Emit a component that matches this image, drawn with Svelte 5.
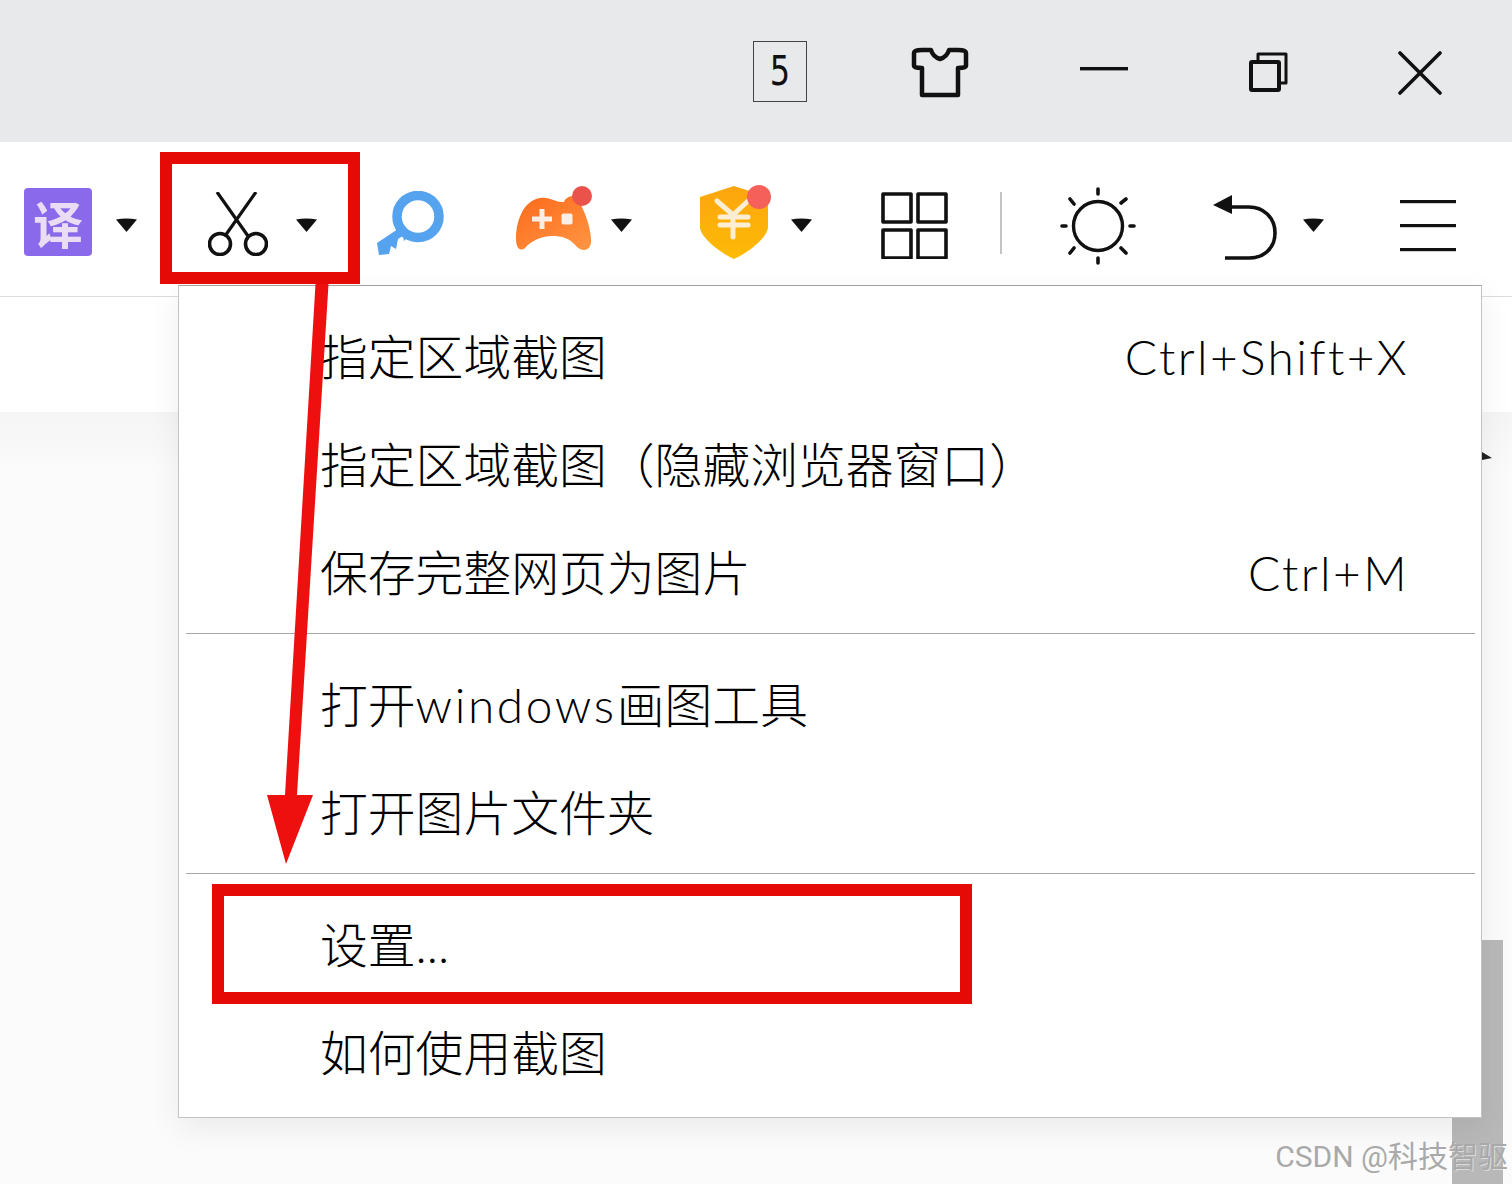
<script lang="ts">
	interface MenuItem {
		label: string;
		shortcut?: string;
	}

	const groups: MenuItem[][] = [
		[
			{ label: '指定区域截图', shortcut: 'Ctrl+Shift+X' },
			{ label: '指定区域截图（隐藏浏览器窗口）' },
			{ label: '保存完整网页为图片', shortcut: 'Ctrl+M' }
		],
		[{ label: '打开windows画图工具' }, { label: '打开图片文件夹' }],
		[{ label: '设置...' }, { label: '如何使用截图' }]
	];
</script>

{#snippet caret()}
	<svg class="caret" width="21" height="14" viewBox="0 0 21 14"><path d="M0 1.5Q10 -0.5 21 1.5L10.5 14Z" fill="#111" /></svg>
{/snippet}

<div class="page">
	<div class="titlebar">
		<div class="tab-count"><span>5</span></div>
		<svg class="shirt" width="58" height="52" viewBox="0 0 58 52" fill="none" stroke="#111" stroke-width="4.5" stroke-linejoin="round">
			<path d="M11 3H20Q22 10 29 12Q36 10 38 3H47Q55 3 55 6V19Q55 21 47 21V48H11V21Q3 21 3 19V6Q3 3 11 3Z" />
		</svg>
		<svg class="minus" width="48" height="4" viewBox="0 0 48 4"><rect width="48" height="3.4" fill="#111" /></svg>
		<svg class="restore" width="40" height="40" viewBox="0 0 40 40" fill="none" stroke="#111" stroke-linejoin="round">
			<rect x="2" y="10" width="28" height="28" rx="1" stroke-width="4" />
			<path d="M9 9V2H37V31H31" stroke-width="3" />
		</svg>
		<svg class="close" width="46" height="44" viewBox="0 0 46 44" stroke="#111" stroke-width="3.6" stroke-linecap="round">
			<path d="M3 2L43 42M43 2L3 42" />
		</svg>
	</div>

	<div class="toolbar">
		<div class="translate">译</div>
		{@render caret()}
		<svg class="scissors" width="60" height="64" viewBox="0 0 60 64" fill="none" stroke="#111">
			<path d="M9 0L40 44M48 0L17 44" stroke-width="3.2" />
			<circle cx="12" cy="52" r="10.5" stroke-width="3.6" />
			<circle cx="48" cy="52" r="10.5" stroke-width="3.6" />
		</svg>
		{@render caret()}
		<svg class="key" width="68" height="66" viewBox="0 0 68 66" fill="none">
			<circle cx="42" cy="25.5" r="21" stroke="#55a2ee" stroke-width="9.5" />
			<path d="M25 36L33 45L28 50L27 45L22 48L20 58L15 55L13 63L3 64L1 52Z" fill="#55a2ee" />
		</svg>
		<svg class="game" width="76" height="66" viewBox="0 0 76 66">
			<defs>
				<linearGradient id="game-fill" x1="0" y1="0" x2="0.8" y2="1">
					<stop offset="0" stop-color="#fb6a1c" />
					<stop offset="1" stop-color="#ff923f" />
				</linearGradient>
			</defs>
			<path d="M24 13C34 11 40 18 48 17C50 11 58 10 61 13C68 24 76 44 75 58C73 67 66 66 61 62C54 53 46 51 36 51C25 51 15 56 9 63C4 67 0 63 0 54C0 38 6 16 24 13Z" fill="url(#game-fill)" />
			<circle cx="66" cy="11" r="10" fill="#e9534c" />
			<path d="M16 34H36M26 24V44" stroke="#fbeee4" stroke-width="5" />
			<rect x="45.5" y="28.5" width="11" height="11" rx="2" fill="#fbeee4" />
		</svg>
		{@render caret()}
		<svg class="shield" width="72" height="74" viewBox="0 0 72 74">
			<defs>
				<linearGradient id="shield-fill" x1="0" y1="0" x2="0" y2="1">
					<stop offset="0" stop-color="#fda50f" />
					<stop offset="1" stop-color="#fdbb05" />
				</linearGradient>
			</defs>
			<path d="M34 1L68 12V42C68 52 48 68 34 74C20 68 0 52 0 42V12Z" fill="url(#shield-fill)" />
			<path d="M17 16L33 30L48 16M33 30V52M20 32H48M20 40H48" fill="none" stroke="#fbeed3" stroke-width="5" stroke-linecap="round" />
			<circle cx="59" cy="12" r="12" fill="#f5605a" />
		</svg>
		{@render caret()}
		<svg class="grid-icon" width="67" height="67" viewBox="0 0 67 67" fill="none" stroke="#111" stroke-width="3.6" stroke-linejoin="round">
			<rect x="2" y="2" width="28" height="28" />
			<rect x="37" y="2" width="28" height="28" />
			<rect x="2" y="38" width="28" height="28" />
			<rect x="37" y="38" width="28" height="28" />
		</svg>
		<div class="divider"></div>
		<svg class="sun" width="76" height="78" viewBox="0 0 76 78" fill="none" stroke="#111" stroke-linecap="round">
			<circle cx="38" cy="39" r="24.5" stroke-width="3.4" />
			<path d="M38 2V7M38 71V76M2 39H6M70 39H74M10 12L14 17M66 12L61 16M10 66L14 61M66 66L61 61" stroke-width="3.6" />
		</svg>
		<svg class="undo" width="64" height="66" viewBox="0 0 64 66" fill="none">
			<path d="M19 12H36C50 12 62 22 62 38C62 54 50 63 36 63H12" stroke="#111" stroke-width="3.6" />
			<path d="M0 10L19 0V19Z" fill="#111" />
		</svg>
		{@render caret()}
		<svg class="menu-icon" width="56" height="54" viewBox="0 0 56 54" fill="#111">
			<rect width="56" height="3.2" y="2" />
			<rect width="56" height="3.2" y="26" />
			<rect width="56" height="3.2" y="50" />
		</svg>
	</div>

	<div class="address-strip"></div>
	<div class="content"></div>

	<div class="scroll-thumb"></div>
	<svg class="page-tick" width="10" height="8" viewBox="0 0 10 8"><path d="M0 0L10 6L0 8Z" fill="#222" /></svg>

	<div class="menu">
		{#each groups as group, i}
			{#if i > 0}
				<div class="separator"></div>
			{/if}
			{#each group as item}
				<div class="menu-item">
					<span>
						{#each item.label.split(/([a-z]+)/) as part, j}
							{#if j % 2}<span class="latin">{part}</span>{:else}{part}{/if}
						{/each}
					</span>
					{#if item.shortcut}
						<span class="shortcut">{item.shortcut}</span>
					{/if}
				</div>
			{/each}
		{/each}
	</div>

	<div class="mark mark-tool"></div>
	<div class="mark mark-settings"></div>
	<svg class="arrow" width="80" height="600" viewBox="0 0 80 600">
		<path d="M49.5 0L62.5 0L31 511L47 511L20 580L1 511L19 511Z" fill="#ee0f0f" />
	</svg>

	<div class="watermark">CSDN @科技智驱</div>
</div>

<style>
	:global(body) {
		background: #fff;
	}

	.page {
		position: relative;
		width: 1512px;
		height: 1184px;
		overflow: hidden;
		display: flex;
		flex-direction: column;
		font-family: Lato, 'Noto Sans CJK SC', sans-serif;
		color: #111;
	}

	.titlebar {
		height: 142px;
		background: #e8e9eb;
		display: flex;
		align-items: center;
		padding-left: 753px;
		flex-shrink: 0;
	}

	.tab-count {
		width: 52px;
		height: 59px;
		border: 1.5px solid #444;
		display: flex;
		align-items: center;
		justify-content: center;
		font-family: 'DejaVu Sans', sans-serif;
		font-size: 32px;
		color: #111;
	}

	.tab-count span {
		transform: scaleY(1.25);
	}

	.shirt {
		margin-left: 104px;
		margin-top: 3px;
	}

	.minus {
		margin-left: 111px;
		margin-top: -4px;
	}

	.restore {
		margin-left: 121px;
		margin-top: 2px;
	}

	.close {
		margin-left: 108px;
		margin-top: 3px;
	}

	.toolbar {
		height: 155px;
		background: #fff;
		border-bottom: 1px solid #dcdcdc;
		box-sizing: border-box;
		display: flex;
		align-items: center;
		padding-left: 24px;
		flex-shrink: 0;
	}

	.translate {
		width: 68px;
		height: 68px;
		border-radius: 4px;
		background: #8a6aea;
		color: #eadcf5;
		font-family: 'Noto Sans CJK SC', sans-serif;
		font-size: 50px;
		font-weight: 700;
		line-height: 68px;
		text-align: center;
		margin-top: 5px;
	}

	.caret {
		margin-left: 24px;
		margin-top: 12px;
	}

	.scissors {
		margin-left: 71px;
		margin-top: 9px;
	}

	.scissors + .caret {
		margin-left: 28px;
	}

	.key {
		margin-left: 59px;
		margin-top: 10px;
	}

	.game {
		margin-left: 72px;
		margin-top: -3px;
	}

	.game + .caret {
		margin-left: 19px;
	}

	.shield {
		margin-left: 68px;
		margin-top: 5px;
	}

	.shield + .caret {
		margin-left: 19px;
	}

	.grid-icon {
		margin-left: 69px;
		margin-top: 13px;
	}

	.divider {
		width: 2px;
		height: 62px;
		margin-left: 52px;
		background: #c4c4c4;
		margin-top: 8px;
	}

	.sun {
		margin-left: 58px;
		margin-top: 14px;
	}

	.undo {
		margin-left: 77px;
		margin-top: 18px;
	}

	.undo + .caret {
		margin-left: 26px;
	}

	.menu-icon {
		margin-left: 76px;
		margin-top: 12px;
	}

	.address-strip {
		height: 115px;
		background: #fff;
		flex-shrink: 0;
	}

	.content {
		flex: 1;
		background: linear-gradient(#f5f5f5, #fbfbfb 60px);
	}

	.scroll-thumb {
		position: absolute;
		left: 1452px;
		top: 940px;
		width: 51px;
		height: 244px;
		background: #b8b8b8;
	}

	.page-tick {
		position: absolute;
		left: 1482px;
		top: 452px;
	}

	.menu {
		position: absolute;
		left: 178px;
		top: 285px;
		width: 1304px;
		height: 833px;
		box-sizing: border-box;
		background: #fff;
		border: 1px solid #c4c4c4;
		border-top-color: #a0a0a0;
		padding: 18px 6px 0 141px;
		box-shadow: 0 10px 30px rgba(0, 0, 0, 0.07);
	}

	.menu-item {
		height: 108px;
		box-sizing: border-box;
		padding: 0 68px 2px 0;
		display: flex;
		align-items: center;
		justify-content: space-between;
		font-size: 47.8px;
		font-weight: 300;
		color: #000;
		line-height: 1;
		white-space: nowrap;
	}

	.latin {
		letter-spacing: 2.6px;
	}

	.shortcut {
		letter-spacing: 2.4px;
		margin-right: -2px;
	}

	.separator {
		height: 1px;
		background: #a8a8a8;
		margin: 5px 0 18px -134px;
	}

	.mark {
		position: absolute;
		box-sizing: border-box;
		border: 12px solid #e60a06;
	}

	.mark-tool {
		left: 160px;
		top: 152px;
		width: 200px;
		height: 132px;
	}

	.mark-settings {
		left: 212px;
		top: 884px;
		width: 760px;
		height: 120px;
	}

	.arrow {
		position: absolute;
		left: 266px;
		top: 284px;
	}

	.watermark {
		position: absolute;
		right: 4px;
		top: 1138px;
		font-family: Roboto, 'Noto Sans CJK SC', sans-serif;
		font-size: 30px;
		line-height: 38px;
		color: #a9a9a9;
		text-shadow: 1px 1px 0 rgba(255, 255, 255, 0.5);
		white-space: nowrap;
	}
</style>
